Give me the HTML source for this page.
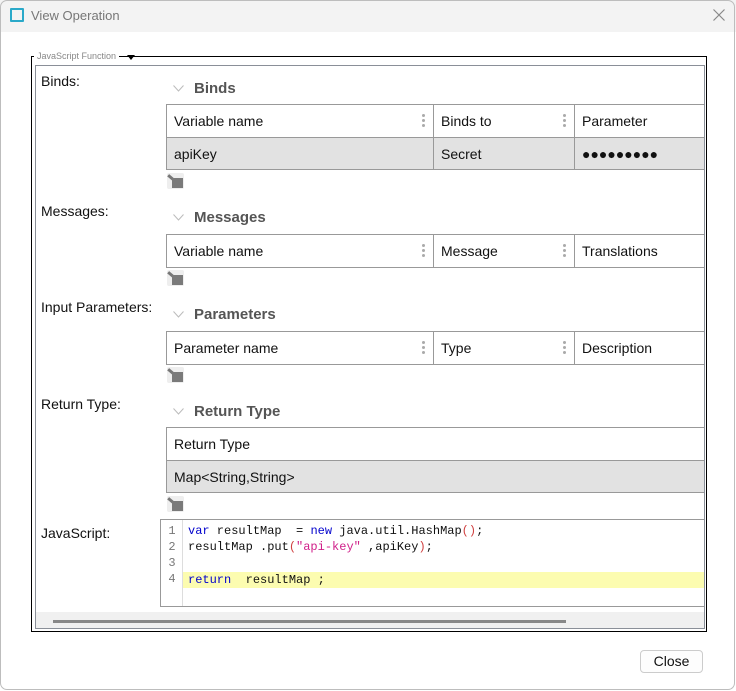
<!DOCTYPE html>
<html><head><style>
*{box-sizing:border-box;margin:0;padding:0}
body{width:736px;height:691px;background:#fff;font-family:"Liberation Sans",sans-serif;font-size:14px;color:#111;position:relative;overflow:hidden}
.win{position:absolute;left:0;top:0;width:736px;height:691px;background:#fff;overflow:hidden}
.wb{position:absolute;left:0;top:0;width:735px;height:690px;border:1px solid #bdbdbd;border-radius:7px;pointer-events:none}
.title{height:32px;background:#f3f3f3;position:relative}
.title .ic{position:absolute;left:10px;top:8px;width:14px;height:14px;border:2px solid #2aa9c9;border-radius:1px}
.title .t{position:absolute;left:31px;top:8px;font-size:13px;color:#777}
.abs{position:absolute}
.fs{left:31px;top:56px;width:676px;height:576px;border:1px solid #000}
.leg{left:34px;top:51px;background:#fff;padding:0 3px;font-size:9px;color:#888}
.tri{left:127px;top:55px;width:0;height:0;border-left:4px solid transparent;border-right:4px solid transparent;border-top:5px solid #000}
.inner{left:35px;top:65px;width:670px;height:564px;border:1px solid #8a8f98;overflow:hidden}
.lbl{position:absolute;left:5px;font-size:14px}
.sh{position:absolute;left:137px;font-weight:bold;color:#555;font-size:15px}
.sh svg{position:absolute;left:0;top:5px}
.sh b{margin-left:21px}
table{position:absolute;left:130px;border-collapse:collapse;width:540px;table-layout:fixed}
td{border:1px solid #999;height:33px;padding:0 7px;font-size:14px;position:relative;white-space:nowrap;overflow:hidden}
tr.d td{background:#e2e2e2;height:32px}
.dots{position:absolute;right:8px;top:9px;width:3px;font-size:0}
.dots i{display:block;width:3px;height:3px;background:#aaa;border-radius:50%;margin-bottom:2px}
.pen{position:absolute;left:131px;width:17px;height:16px;background:#eee;border-radius:2px}
.pen:after{content:"";position:absolute;left:5px;top:5px;width:11px;height:10px;background:#7a7a7a}
.pen:before{content:"";position:absolute;left:0;top:4px;width:10px;height:3px;background:#777;transform:rotate(40deg)}
.code{position:absolute;left:124px;top:453px;width:550px;height:88px;border:1px solid #999;font-family:"Liberation Mono",monospace;font-size:12px}
.gut{position:absolute;left:0;top:0;width:22px;height:86px;border-right:1px solid #ddd;color:#777;text-align:center}
.ln{position:absolute;left:27px;height:16px;line-height:16px;white-space:pre}
.kw{color:#00c}.st{color:#d0208a}.pr{color:#d04040}
.sb{left:0;top:546px;width:670px;height:18px;background:#f0f0f0}
.th{left:17px;top:554px;width:513px;height:3px;background:#888}
.btn{position:absolute;left:640px;top:650px;width:63px;height:23px;border:1px solid #ccc;border-radius:4px;text-align:center;line-height:21px;font-size:14px;background:#fdfdfd}
</style></head><body>
<div class="win">
<div class="title"><div class="ic"></div><div class="t">View Operation</div>
<svg class="abs" style="left:713px;top:9px" width="12" height="12"><path d="M0.5 0.5L11.5 11.5M11.5 0.5L0.5 11.5" stroke="#888" stroke-width="1.2"/></svg></div>
<div class="abs fs"></div>
<div class="abs leg">JavaScript Function</div>
<div class="abs tri"></div>
<div class="abs inner">
 <div class="lbl" style="top:7px">Binds:</div>
 <div class="sh" style="top:14px"><svg width="11" height="7"><path d="M0.5 0.5L5.5 6L10.5 0.5" fill="none" stroke="#bbb"/></svg><b>Binds</b></div>
 <table style="top:38px"><colgroup><col style="width:267px"><col style="width:141px"><col></colgroup>
 <tr><td>Variable name<div class="dots"><i></i><i></i><i></i></div></td><td>Binds to<div class="dots"><i></i><i></i><i></i></div></td><td>Parameter</td></tr>
 <tr class="d"><td>apiKey</td><td>Secret</td><td>●●●●●●●●●</td></tr></table>
 <div class="pen" style="top:107px"></div>
 <div class="lbl" style="top:137px">Messages:</div>
 <div class="sh" style="top:143px"><svg width="11" height="7"><path d="M0.5 0.5L5.5 6L10.5 0.5" fill="none" stroke="#bbb"/></svg><b>Messages</b></div>
 <table style="top:168px"><colgroup><col style="width:267px"><col style="width:141px"><col></colgroup>
 <tr><td>Variable name<div class="dots"><i></i><i></i><i></i></div></td><td>Message<div class="dots"><i></i><i></i><i></i></div></td><td>Translations</td></tr></table>
 <div class="pen" style="top:204px"></div>
 <div class="lbl" style="top:233px">Input Parameters:</div>
 <div class="sh" style="top:240px"><svg width="11" height="7"><path d="M0.5 0.5L5.5 6L10.5 0.5" fill="none" stroke="#bbb"/></svg><b>Parameters</b></div>
 <table style="top:265px"><colgroup><col style="width:267px"><col style="width:141px"><col></colgroup>
 <tr><td>Parameter name<div class="dots"><i></i><i></i><i></i></div></td><td>Type<div class="dots"><i></i><i></i><i></i></div></td><td>Description</td></tr></table>
 <div class="pen" style="top:301px"></div>
 <div class="lbl" style="top:330px">Return Type:</div>
 <div class="sh" style="top:337px"><svg width="11" height="7"><path d="M0.5 0.5L5.5 6L10.5 0.5" fill="none" stroke="#bbb"/></svg><b>Return Type</b></div>
 <table style="top:361px"><tr><td>Return Type</td></tr><tr class="d"><td>Map&lt;String,String&gt;</td></tr></table>
 <div class="pen" style="top:430px"></div>
 <div class="lbl" style="top:459px">JavaScript:</div>
 <div class="code">
  <div class="abs" style="left:22px;top:52px;width:528px;height:16px;background:#fcfcb0"></div>
  <div class="gut"><div style="position:absolute;top:3px;width:22px;line-height:16px">1<br>2<br>3<br>4</div></div>
  <div class="ln" style="top:3px"><span class="kw">var</span> resultMap  = <span class="kw">new</span> java.util.HashMap<span class="pr">()</span>;</div>
  <div class="ln" style="top:19px">resultMap .put<span class="pr">(</span><span class="st">"api-key"</span> ,apiKey<span class="pr">)</span>;</div>
  <div class="ln" style="top:52px"><span class="kw">return</span>  resultMap ;</div>
 </div>
 <div class="abs sb"></div><div class="abs th"></div>
</div>
<div class="btn">Close</div>
<div class="wb"></div>
</div>
</body></html>
